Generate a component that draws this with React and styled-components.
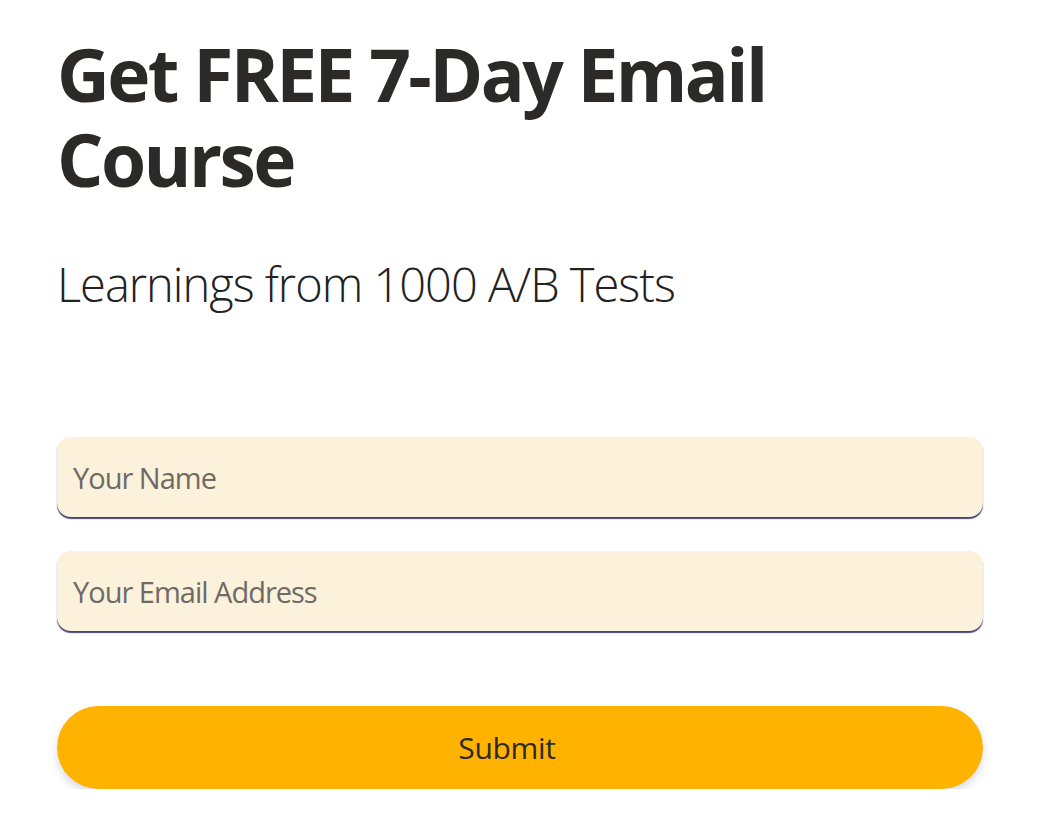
import React from "react";
import styled, { createGlobalStyle } from "styled-components";

const GlobalStyle = createGlobalStyle`
  body {
    margin: 0;
    background: #ffffff;
    font-family: "Open Sans", "Liberation Sans", sans-serif;
  }
`;

const Page = styled.div`
  width: 926px;
  padding: 31px 0 0 57px;
`;

const Title = styled.h1`
  margin: 0;
  font-family: "Open Sans", sans-serif;
  font-weight: 700;
  font-size: 73px;
  line-height: 85px;
  letter-spacing: -2.6px;
  color: #2b2a29;
`;

const Subtitle = styled.p`
  margin: 53px 0 0;
  font-family: "Open Sans", sans-serif;
  font-weight: 300;
  font-size: 47px;
  line-height: 60px;
  letter-spacing: -1px;
  color: #222222;
`;

const Form = styled.form`
  display: flex;
  flex-direction: column;
  margin-top: 123px;
`;

const Field = styled.input`
  box-sizing: border-box;
  width: 100%;
  height: 80px;
  margin-bottom: 34px;
  padding: 0 16px;
  border: none;
  border-radius: 14px;
  background: #fcf1da;
  box-shadow: 0 2px 1px #46437a;
  font-family: "Open Sans", sans-serif;
  font-size: 29px;
  color: #333333;
  outline: none;

  &::placeholder {
    color: #6e6b66;
    letter-spacing: -1px;
  }
`;

const SubmitButton = styled.button`
  height: 83px;
  margin-top: 41px;
  padding: 0 26px 0 0;
  border: none;
  border-radius: 42px;
  background: #ffb300;
  box-shadow: 0 5px 8px rgba(90, 100, 150, 0.22);
  font-family: "Open Sans", sans-serif;
  font-size: 30px;
  color: #2b2a29;
  letter-spacing: -0.3px;
  cursor: pointer;
`;

export default function App() {
  return (
    <>
      <GlobalStyle />
      <Page>
        <Title>
          Get FREE 7-Day Email
          <br />
          Course
        </Title>
        <Subtitle>Learnings from 1000 A/B Tests</Subtitle>
        <Form onSubmit={(e) => e.preventDefault()}>
          <Field type="text" placeholder="Your Name" />
          <Field type="email" placeholder="Your Email Address" />
          <SubmitButton type="submit">Submit</SubmitButton>
        </Form>
      </Page>
    </>
  );
}
